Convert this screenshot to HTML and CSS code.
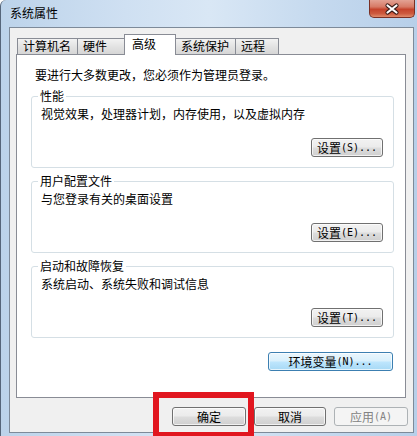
FILE: index.html
```html
<!DOCTYPE html>
<html lang="zh-CN">
<head>
<meta charset="utf-8">
<title>系统属性</title>
<link rel="stylesheet" href="styles.css">
</head>
<body>
<div class="window">
  <div class="titlebar">
    <span class="title">系统属性</span>
    <div class="close">
      <svg width="44" height="16" viewBox="0 0 44 16">
        <path d="M17.5 4.5 L26.5 11.5 M26.5 4.5 L17.5 11.5" stroke="#3b1c18" stroke-width="4.2" stroke-linecap="round"/>
        <path d="M17.5 4.5 L26.5 11.5 M26.5 4.5 L17.5 11.5" stroke="#ffffff" stroke-width="2.2" stroke-linecap="round"/>
      </svg>
    </div>
  </div>
  <div class="dialog">
    <div class="tabs">
      <div class="tab t1">计算机名</div>
      <div class="tab t2">硬件</div>
      <div class="tab t3 selected">高级</div>
      <div class="tab t4">系统保护</div>
      <div class="tab t5">远程</div>
    </div>
    <div class="panel">
      <p class="intro">要进行大多数更改，您必须作为管理员登录。</p>
      <div class="group">
        <div class="gtitle">性能</div>
        <div class="gdesc">视觉效果，处理器计划，内存使用，以及虚拟内存</div>
        <div class="gactions"><button class="btn gbtn">设置<span class="mono">(S)...</span></button></div>
      </div>
      <div class="group">
        <div class="gtitle">用户配置文件</div>
        <div class="gdesc">与您登录有关的桌面设置</div>
        <div class="gactions"><button class="btn gbtn">设置<span class="mono">(E)...</span></button></div>
      </div>
      <div class="group">
        <div class="gtitle">启动和故障恢复</div>
        <div class="gdesc">系统启动、系统失败和调试信息</div>
        <div class="gactions"><button class="btn gbtn">设置<span class="mono">(T)...</span></button></div>
      </div>
      <div class="envrow"><button class="btn hot env">环境变量<span class="mono">(N)...</span></button></div>
    </div>
    <div class="footer">
      <button class="btn ok">确定</button>
      <button class="btn cancel">取消</button>
      <button class="btn apply" disabled>应用<span class="mono">(A)</span></button>
    </div>
  </div>
  <div class="highlight"></div>
</div>
</body>
</html>
```

FILE: styles.css
```css
html, body {
  margin: 0;
  padding: 0;
  background: #ffffff;
}

body {
  font-family: "Noto Sans CJK SC", "Noto Sans", sans-serif;
  font-size: 12px;
  color: #000;
}

.window {
  position: relative;
  width: 417px;
  height: 436px;
  box-sizing: border-box;
  border-left: 1px solid #56667a;
  border-top-left-radius: 6px;
  background: linear-gradient(90deg, #bcd3ea 0%, #cfe0f2 30%, #d9e7f5 50%, #c6daef 75%, #b7cfe9 100%);
  display: flex;
  flex-direction: column;
  overflow: hidden;
}

.titlebar {
  height: 27px;
  flex: none;
  display: flex;
  align-items: flex-start;
  padding-left: 9px;
}

.title {
  margin-top: 5px;
  line-height: 16px;
  color: #000;
}

.close {
  margin-left: auto;
  margin-right: 2px;
  width: 46px;
  height: 18px;
  box-sizing: border-box;
  border: 1px solid #7a3024;
  border-top: none;
  border-radius: 0 0 5px 5px;
  background: linear-gradient(#e3a294 0%, #d77a66 40%, #c5432c 55%, #cd5a3e 80%, #e08c6c 100%);
  display: flex;
  align-items: center;
  justify-content: center;
}

.close svg {
  display: block;
}

.dialog {
  margin-left: 8px;
  width: 405px;
  height: 406px;
  box-sizing: border-box;
  border: 1px solid #7d8a99;
  background: #f0f0f0;
  padding: 6px 0 0 6px;
  display: flex;
  flex-direction: column;
}

.tabs {
  height: 20px;
  display: flex;
  align-items: flex-end;
  padding-left: 1px;
}

.tab {
  box-sizing: border-box;
  height: 16px;
  line-height: 14px;
  padding-left: 5px;
  border: 1px solid #898c95;
  border-bottom: none;
  margin-left: -1px;
  background: linear-gradient(#f2f2f2, #e3e3e3 50%, #d6d6d6);
  white-space: nowrap;
}

.tab:first-child {
  margin-left: 0;
}

.t1 { width: 61px; }
.t2 { width: 48px; }
.t3 { width: 52px; }
.t4 { width: 61px; }
.t5 { width: 44px; }

.tab.selected {
  position: relative;
  z-index: 1;
  height: 21px;
  margin-bottom: -1px;
  padding-left: 7px;
  padding-top: 1px;
  line-height: 16px;
  background: #ffffff;
}

.panel {
  width: 390px;
  height: 344px;
  box-sizing: border-box;
  border: 1px solid #898c95;
  background: #ffffff;
  padding-top: 12px;
}

.intro {
  margin: 0 0 0 18px;
  line-height: 16px;
}

.group {
  margin: 13px 0 0 14px;
  width: 363px;
  box-sizing: border-box;
  border: 1px solid #d5dfe5;
  border-radius: 3px;
  padding-bottom: 10px;
}

.gtitle {
  margin: -9px 0 0 6px;
  padding: 0 2px;
  width: fit-content;
  background: #ffffff;
  line-height: 16px;
}

.gdesc {
  margin-top: 2px;
  padding-left: 9px;
  line-height: 16px;
}

.gactions {
  margin-top: 16px;
  display: flex;
  justify-content: flex-end;
  padding-right: 10px;
}

.btn {
  font-family: "Noto Sans CJK SC", "Noto Sans", sans-serif;
  font-size: 12px;
  color: #000;
  height: 19px;
  box-sizing: border-box;
  padding: 0;
  border: 1px solid #707070;
  border-radius: 3px;
  background: linear-gradient(#f2f2f2 0%, #ebebeb 48%, #dddddd 52%, #cfcfcf 100%);
  box-shadow: inset 0 0 0 1px rgba(255, 255, 255, 0.7);
  line-height: 16px;
  display: flex;
  align-items: center;
  justify-content: center;
  white-space: nowrap;
}

.mono {
  font-family: "DejaVu Sans Mono", "Liberation Mono", monospace;
  font-size: 10px;
}

.gbtn {
  width: 72px;
}

.envrow {
  margin-top: 14px;
  display: flex;
  justify-content: flex-end;
  padding-right: 12px;
}

.env {
  width: 125px;
}

.btn.hot {
  border-color: #3c7fb1;
  background: linear-gradient(#eaf6fd 0%, #d9f0fc 48%, #bee6fd 52%, #a7d9f5 100%);
}

.footer {
  margin-top: 9px;
  display: flex;
  justify-content: flex-end;
  gap: 8px;
  padding-right: 5px;
}

.ok { width: 74px; }
.cancel { width: 72px; }
.apply { width: 74px; }

.btn:disabled {
  color: #838383;
  border-color: #adb2b5;
  background: #f4f4f4;
  box-shadow: none;
}

.highlight {
  position: absolute;
  left: 152px;
  top: 392px;
  width: 101px;
  height: 46px;
  box-sizing: border-box;
  border: 6px solid #e1161f;
}
```
